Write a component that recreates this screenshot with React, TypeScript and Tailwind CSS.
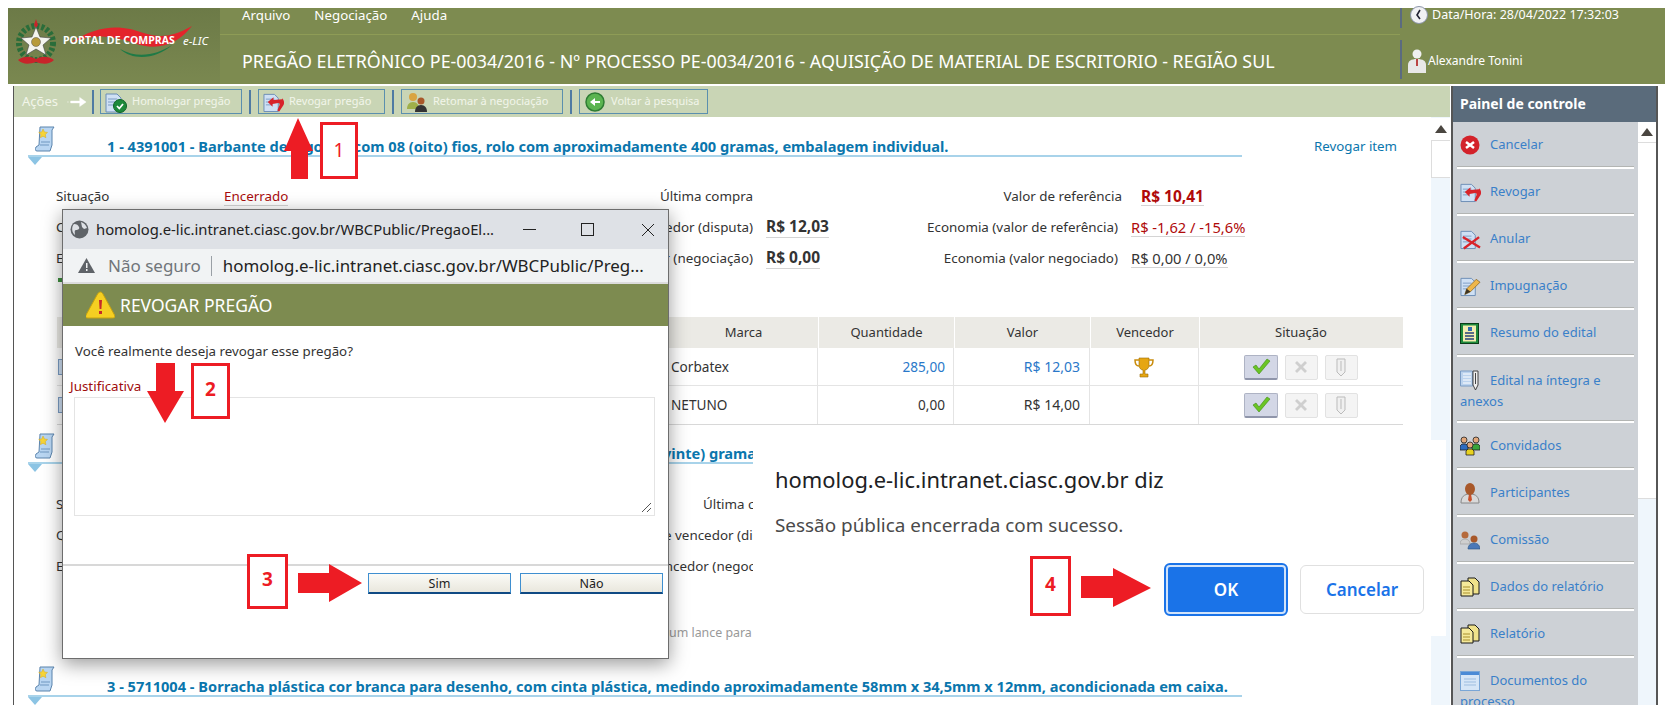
import type { ReactNode } from "react";

const BODY_FONT = "font-['Noto_Sans','Open_Sans',sans-serif]";

function ScrollIcon() {
  return (
    <svg width="20" height="26" viewBox="0 0 20 26" className="shrink-0">
      <path d="M5 1h14l-2 3v15l-2 6H2c-2 0-2-2-1-4l3-2z" fill="#b9d6f2" stroke="#5b84ad" />
      <path d="M6 16h9M5 19h9" stroke="#6e97c0" />
      <path d="M8 3l1.5 3 3 .4-2.2 2.1.6 3.2L8 10.200 5.300 11.700l.6-3.200L3.700 6.400l3-.4z" fill="#f6d437" stroke="#d6a91c" strokeWidth=".5" />
    </svg>
  );
}

function DocBase() {
  return (
    <>
      <path d="M1 3h11l4 4v14H1z" fill="#cfe0f4" stroke="#6b8db5" />
      <path d="M3 8h9M3 11h9M3 14h7" stroke="#7d9cc4" />
    </>
  );
}

function CheckDocIcon() {
  return (
    <svg width="22" height="22" viewBox="0 0 22 22" className="shrink-0">
      <DocBase />
      <circle cx="15" cy="15" r="6.500" fill="#1d8a3a" stroke="#0f6326" />
      <path d="M12 15l2.300 2.500L18 13" fill="none" stroke="#fff" strokeWidth="1.800" />
    </svg>
  );
}

function RevokeIcon() {
  return (
    <svg width="21" height="22" viewBox="0 0 22 22" className="shrink-0">
      <DocBase />
      <path d="M20 8l-9 1V6L5 11l5 5v-3l6-1c1 0 2 1 1 3l-2 5 2 1 4-6c2-3 1-6-1-8z" fill="#d8232a" />
    </svg>
  );
}

function AnnulIcon() {
  return (
    <svg width="21" height="22" viewBox="0 0 22 22" className="shrink-0">
      <DocBase />
      <path d="M3 9l18 11M20 9L4 21" stroke="#d8232a" strokeWidth="2.500" />
    </svg>
  );
}

function PencilIcon() {
  return (
    <svg width="21" height="22" viewBox="0 0 22 22" className="shrink-0">
      <DocBase />
      <path d="M5 20l2-6L17 4l4 3-10 10z" fill="#eeb64a" stroke="#7a5a20" strokeWidth=".7" />
      <path d="M5 20l2-6 4 3z" fill="#3d3322" />
    </svg>
  );
}

function SummaryIcon() {
  return (
    <svg width="20" height="21" viewBox="0 0 20 21" className="shrink-0">
      <rect x=".5" y=".5" width="18" height="20" fill="#1e8a3c" stroke="#0a3d18" />
      <rect x="3" y="2.500" width="13" height="16" fill="#f3eeb0" />
      <rect x="8" y="4" width="4" height="4" fill="#2f6bb0" />
      <path d="M5 10h9M5 13h9M5 16h9" stroke="#27407a" strokeWidth="1.300" />
    </svg>
  );
}

function ClipDocIcon() {
  return (
    <svg width="20" height="22" viewBox="0 0 20 22" className="shrink-0">
      <path d="M.5 2h12v15H.5z" fill="#bcd3ee" stroke="#7b9cc4" />
      <path d="M3 5h8M3 8h8M3 11h8M3 14h8" stroke="#fff" />
      <path d="M13 2h5v14l-2.500 5-2.500-5z" fill="#eee" stroke="#444" />
      <path d="M15.500 4v11" stroke="#444" />
    </svg>
  );
}

function PeopleIcon() {
  const head = (cx: number, cy: number, shirt: string) => (
    <>
      <circle cx={cx} cy={cy} r="3" fill="#e2a77a" stroke="#222" strokeWidth=".8" />
      <path d={`M${cx - 4} ${cy + 10}v-4l2-2h4l2 2v4z`} fill={shirt} stroke="#222" strokeWidth=".8" />
    </>
  );
  return (
    <svg width="20" height="20" viewBox="0 0 20 20" className="shrink-0">
      {head(4, 4, "#2e6cc0")}
      {head(16, 4, "#3aa53a")}
      {head(10, 9, "#e9d21f")}
    </svg>
  );
}

function PersonIcon() {
  return (
    <svg width="20" height="22" viewBox="0 0 20 22" className="shrink-0">
      <path d="M1 21c0-6 3-9 9-9s9 3 9 9z" fill="#d9d9d9" stroke="#888" />
      <path d="M9 12h2l1 6-2 2-2-2z" fill="#c9502b" />
      <ellipse cx="10" cy="7" rx="5" ry="6" fill="#a8582a" />
    </svg>
  );
}

function CommitteeIcon() {
  return (
    <svg width="20" height="19" viewBox="0 0 20 19" className="shrink-0">
      <circle cx="5" cy="4" r="3.500" fill="#b56a3c" />
      <path d="M0 13c0-3 2-5 5-5s5 2 5 5z" fill="#cfcfcf" stroke="#999" strokeWidth=".6" />
      <circle cx="14" cy="8" r="3.500" fill="#a8582a" />
      <path d="M8 18c0-3 2-6 6-6s6 3 6 6z" fill="#4a78b8" stroke="#27507f" strokeWidth=".6" />
    </svg>
  );
}

function ReportIcon() {
  return (
    <svg width="20" height="20" viewBox="0 0 20 20" className="shrink-0">
      <path d="M8 1h7l4 4v12H8z" fill="#f0e28a" stroke="#1a1a1a" />
      <path d="M1 4h8l4 4v11H1z" fill="#f5e99a" stroke="#1a1a1a" />
      <path d="M3 10h7M3 13h7M3 16h7" stroke="#a88f2c" />
    </svg>
  );
}

function WindowDocIcon() {
  return (
    <svg width="20" height="20" viewBox="0 0 20 20" className="shrink-0">
      <rect x=".5" y=".5" width="19" height="19" fill="#d6e6f7" stroke="#7aa6d6" />
      <rect x="1" y="1" width="18" height="3" fill="#4a8ad6" />
      <path d="M4 8h12M4 11h12M4 14h12" stroke="#9dbde0" />
    </svg>
  );
}

function UpTriangle() {
  return <div className="w-0 h-0 border-x-[6px] border-x-transparent border-b-[8px] border-b-[#4a4640]" />;
}

function ToolButton({ icon, label, width }: { icon: ReactNode; label: string; width: string }) {
  return (
    <div className={`flex items-center gap-[5px] h-[25px] pl-[4px] border border-[#5b8fae] ${width}`}>
      {icon}
      <span className="text-[11px] text-[#f2f5ea] whitespace-nowrap">{label}</span>
    </div>
  );
}

function Sep() {
  return <div className="w-[2px] h-[24px] bg-[#4f7ba3] shrink-0" />;
}

function Header() {
  return (
    <div className="flex h-[76px] w-[1657px] ml-[8px] bg-[#7d8b50] text-white">
      <div className="relative w-[212px] shrink-0 bg-gradient-to-b from-[#6c7a47] to-[#7a8850]">
        <svg width="200" height="50" viewBox="0 0 200 50" className="absolute left-[4px] top-[8px]">
          <path d="M58 27C80 12 100 9 118 13c20 5 32 14 62-3-14 18-34 26-58 17C100 19 80 18 58 27z" fill="#e3242b" />
          <path d="M108 33c18 10 36 6 52-4-14 13-38 17-52 4z" fill="#1f7a46" />
          <circle cx="24" cy="27" r="17" fill="none" stroke="#2a6d3a" strokeWidth="6" strokeDasharray="3 2" />
          <path d="M24 3l2 6-2 3-2-3z" fill="#c8242a" />
          <path d="M24 11l4 10 11 1-8 7 3 10-10-6-10 6 3-10-8-7 11-1z" fill="#f4f4ee" stroke="#444" strokeWidth=".6" />
          <circle cx="24" cy="26" r="4.500" fill="#b79a3a" stroke="#555" strokeWidth=".5" />
          <path d="M6 44c6-4 12-4 18-1 6-3 12-3 18 1-5 5-12 4-18 2-6 2-13 3-18-2z" fill="#c8242a" />
        </svg>
        <span className="absolute left-[55px] top-[25px] text-[10.500px] font-bold whitespace-nowrap font-['Open_Sans',sans-serif]">
          PORTAL DE COMPRAS
        </span>
        <span className="absolute left-[175px] top-[24px] text-[11.500px] italic whitespace-nowrap">e-LIC</span>
      </div>
      <div className="w-[1180px] shrink-0 pl-[22px] border-t-[26px] border-t-transparent">
        <div className="absolute top-[8px] flex gap-[24px] text-[13.300px] h-[16px] items-center">
          <span>Arquivo</span>
          <span>Negociação</span>
          <span>Ajuda</span>
        </div>
        <div className="border-t border-[#8e9c56] -ml-[22px] pl-[22px] pt-[14px] text-[17.870px] leading-[24px] whitespace-nowrap">
          PREGÃO ELETRÔNICO PE-0034/2016 - Nº PROCESSO PE-0034/2016 - AQUISIÇÃO DE MATERIAL DE ESCRITORIO - REGIÃO SUL
        </div>
      </div>
      <div className="flex flex-col text-[12.500px]">
        <div className="flex items-center h-[20px] border-l-2 border-[#5b6b80] pl-[7px] gap-[3px] pb-[5px]">
          <svg width="20" height="20" viewBox="0 0 20 20" className="shrink-0">
            <circle cx="10" cy="9" r="8.500" fill="#f1f1f4" stroke="#8a93a8" />
            <path d="M11 4l-3 5 3 4" fill="none" stroke="#223" strokeWidth="1.600" />
          </svg>
          <span className="whitespace-nowrap">Data/Hora: 28/04/2022 17:32:03</span>
        </div>
        <div className="flex items-center h-[39px] mt-[12px] border-l-2 border-[#5b6b80] pl-[6px] gap-[2px] pt-[3px] text-[12.100px]">
          <svg width="18" height="24" viewBox="0 0 18 24" className="shrink-0">
            <circle cx="9" cy="5" r="4.500" fill="#f0f0f0" />
            <path d="M0 24v-8c0-4 3-6 9-6s9 2 9 6v8z" fill="#e8e8e8" />
            <path d="M8 10h2v7H8z" fill="#b44" />
          </svg>
          <span className="whitespace-nowrap">Alexandre Tonini</span>
        </div>
      </div>
    </div>
  );
}

function Toolbar() {
  return (
    <div className="flex items-center h-[31px] bg-[#c9d5b5] pl-[8px]">
      <span className="text-[13px] text-[#f2f5ea] w-[45px]">Ações</span>
      <svg width="20" height="12" viewBox="0 0 22 12" className="shrink-0 mr-[5px]">
        <path d="M0 6h2M4 5h10V1l7 5-7 5V7H4z" fill="#fff" stroke="#fff" strokeWidth=".5" />
      </svg>
      <Sep />
      <div className="w-[6px]" />
      <ToolButton icon={<CheckDocIcon />} label="Homologar pregão" width="w-[142px]" />
      <div className="w-[7px]" />
      <Sep />
      <div className="w-[7px]" />
      <ToolButton icon={<RevokeIcon />} label="Revogar pregão" width="w-[127px]" />
      <div className="w-[7px]" />
      <Sep />
      <div className="w-[7px]" />
      <ToolButton
        icon={
          <svg width="22" height="20" viewBox="0 0 22 20" className="shrink-0">
            <circle cx="7" cy="5" r="4" fill="#d9a441" />
            <path d="M1 17c0-4 2-7 6-7s6 3 6 7z" fill="#9fb04a" />
            <circle cx="15" cy="9" r="3.500" fill="#a8582a" />
            <path d="M9 20c0-4 2-7 6-7s6 3 6 7z" fill="#333" />
          </svg>
        }
        label="Retomar à negociação"
        width="w-[162px]"
      />
      <div className="w-[7px]" />
      <Sep />
      <div className="w-[7px]" />
      <ToolButton
        icon={
          <svg width="22" height="22" viewBox="0 0 22 22" className="shrink-0">
            <circle cx="11" cy="11" r="9" fill="#5bb450" stroke="#2f7d33" strokeWidth="1.500" />
            <path d="M16 10H11V7l-5 4 5 4v-3h5z" fill="#fff" />
          </svg>
        }
        label="Voltar à pesquisa"
        width="w-[129px]"
      />
    </div>
  );
}

function SectionHead({ title, revoke, titleClass }: { title: string; revoke?: boolean; titleClass?: string }) {
  return (
    <div className="flex pl-[14px]">
      <div className="w-[1214px]">
        <div className="flex h-[40px] border-b-2 border-[#a8d3ea]">
          <div className="pl-[7px] pt-[9px] w-[79px] shrink-0">
            <ScrollIcon />
          </div>
          <div className={`pt-[20px] text-[14.600px] leading-[18px] font-bold text-[#0a76ad] whitespace-nowrap ${titleClass ?? ""}`}>
            {title}
          </div>
        </div>
        <div className="w-0 h-0 border-x-[7px] border-x-transparent border-t-[8px] border-t-[#8cc4e4]" />
      </div>
      {revoke && (
        <span className="ml-[72px] pt-[20px] h-fit text-[13.300px] leading-[18px] text-[#0a76ad] whitespace-nowrap">Revogar item</span>
      )}
    </div>
  );
}

function Underlined({ children, className }: { children: ReactNode; className?: string }) {
  return <span className={`border-b border-[#d4d4d4] leading-[17px] whitespace-nowrap ${className ?? ""}`}>{children}</span>;
}

function InfoRow(props: {
  a: string;
  b?: ReactNode;
  c: string;
  d?: ReactNode;
  e?: string;
  f?: ReactNode;
  lastGap?: string;
  cWidth?: string;
}) {
  return (
    <div className="flex items-center h-[31px] pl-[42px] text-[13.400px] text-[#333]">
      <span className="w-[168px] shrink-0 whitespace-nowrap">{props.a}</span>
      <span className="w-[150px] shrink-0">{props.b}</span>
      <span className={`shrink-0 text-right whitespace-nowrap ${props.cWidth ?? "w-[379px]"}`}>{props.c}</span>
      <span className="w-[150px] shrink-0 pl-[13px]">{props.d}</span>
      <span className={`shrink-0 text-right whitespace-nowrap ${props.lastGap ?? "w-[215px]"}`}>{props.e}</span>
      {props.f}
    </div>
  );
}

function ActionButtons() {
  return (
    <div className="flex justify-center gap-[7px]">
      <div className="flex items-center justify-center w-[34px] h-[25px] rounded-[2px] bg-[#d3d7e6] border border-[#aeb3c4] border-b-2 border-b-[#8f95aa]">
        <svg width="20" height="17" viewBox="0 0 20 17">
          <path d="M2 9l3-2 3 4 8-10 3 2L8 16z" fill="#6bc524" stroke="#3d8a12" strokeWidth=".6" />
        </svg>
      </div>
      <div className="flex items-center justify-center w-[33px] h-[25px] rounded-[2px] bg-[#f4f4f4] border border-[#e2e2e2]">
        <svg width="16" height="16" viewBox="0 0 16 16">
          <path d="M2 4l2-2 4 4 4-4 2 2-4 4 4 4-2 2-4-4-4 4-2-2 4-4z" fill="#cfcfcf" />
        </svg>
      </div>
      <div className="flex items-center justify-center w-[33px] h-[25px] rounded-[2px] bg-[#f4f4f4] border border-[#e2e2e2]">
        <svg width="10" height="20" viewBox="0 0 10 20">
          <path d="M1 2h8v13l-4 4-4-4z" fill="#f0f0f0" stroke="#bbb" />
          <path d="M5 4v10" stroke="#bbb" />
        </svg>
      </div>
    </div>
  );
}

function Table() {
  const cols = "grid grid-cols-[608px_153px_136px_136px_109px_203px]";
  const cell = "border-r border-[#e4e4e4] h-full leading-[38px]";
  return (
    <div className="ml-[43px] w-[1346px] text-[13px] text-[#333]">
      <div className={`${cols} h-[31px] items-center bg-[#ebeae5] text-center`}>
        <span />
        <span className="pl-[4px]">Marca</span>
        <span className="border-l border-white h-full leading-[31px]">Quantidade</span>
        <span className="border-l border-white h-full leading-[31px]">Valor</span>
        <span className="border-l border-white h-full leading-[31px]">Vencedor</span>
        <span className="border-l border-white h-full leading-[31px]">Situação</span>
      </div>
      <div className={`${cols} h-[38px] items-center border-b border-[#e4e4e4] text-[13.600px]`}>
        <span className="pl-[1px]"><div className="w-[10px] h-[16px] bg-[#cfe0f4] border border-[#7b9cc4]" /></span>
        <span className={`pl-[6px] ${cell}`}>Corbatex</span>
        <span className={`text-right pr-[8px] text-[#2a78c9] ${cell}`}>285,00</span>
        <span className={`text-right pr-[9px] text-[#2a78c9] text-[14px] ${cell}`}>R$ 12,03</span>
        <span className="flex items-center justify-center border-r border-[#e4e4e4] h-full">
          <svg width="20" height="21" viewBox="0 0 20 21">
            <path d="M5 1h10v7c0 3-2 5-4 5v4h3v3H6v-3h3v-4c-2 0-4-2-4-5z" fill="#e6a612" stroke="#9a6c06" strokeWidth=".6" />
            <path d="M5 3H1c0 4 2 6 4 6M15 3h4c0 4-2 6-4 6" fill="none" stroke="#c98c0c" strokeWidth="1.500" />
          </svg>
        </span>
        <ActionButtons />
      </div>
      <div className={`${cols} h-[39px] items-center border-b border-[#d8d8d8] text-[13.600px]`}>
        <span className="pl-[1px]"><div className="w-[10px] h-[16px] bg-[#cfe0f4] border border-[#7b9cc4]" /></span>
        <span className={`pl-[6px] ${cell}`}>NETUNO</span>
        <span className={`text-right pr-[8px] ${cell}`}>0,00</span>
        <span className={`text-right pr-[9px] text-[14px] ${cell}`}>R$ 14,00</span>
        <span className="border-r border-[#e4e4e4] h-full" />
        <ActionButtons />
      </div>
    </div>
  );
}

function MainContent() {
  return (
    <div className="w-[1417px] shrink-0 h-[588px] overflow-hidden">
      <div className="h-[307px]">
        <SectionHead
          revoke
          title="1 - 4391001 - Barbante de algodão com 08 (oito) fios, rolo com aproximadamente 400 gramas, embalagem individual."
        />
        <div className="pt-[16px]">
          <InfoRow
            a="Situação"
            b={<Underlined className="text-[#a80c0c]">Encerrado</Underlined>}
            c="Última compra"
            e="Valor de referência"
            lastGap="w-[219px]"
            f={<Underlined className="ml-[19px] text-[15.500px] font-bold text-[#b00a0a]">R$ 10,41</Underlined>}
          />
          <InfoRow
            a="C"
            c="Lance vencedor (disputa)"
            d={<Underlined className="text-[15.500px] font-bold">R$ 12,03</Underlined>}
            e="Economia (valor de referência)"
            f={<Underlined className="ml-[13px] text-[14.700px] text-[#b00a0a]">R$ -1,62 / -15,6%</Underlined>}
          />
          <InfoRow
            a="E"
            c="Lance vencedor (negociação)"
            d={<Underlined className="text-[15.500px] font-bold">R$ 0,00</Underlined>}
            e="Economia (valor negociado)"
            f={<Underlined className="ml-[13px] text-[14.700px]">R$ 0,00 / 0,0%</Underlined>}
          />
        </div>
        <div className="h-[43px] pl-[44px] pt-[4px]">
          <div className="w-[6px] h-[4px] bg-[#3f8f3f]" />
        </div>
        <Table />
      </div>
      <div className="h-[233px]">
        <SectionHead title="(vinte) gramas" titleClass="pl-[551px]" />
        <div className="pt-[17px]">
          <InfoRow a="Situação" c="Última compra" cWidth="w-[422px]" />
          <InfoRow a="Q" c="Lance vencedor (disputa)" cWidth="w-[418px]" />
          <InfoRow a="E" c="Lance vencedor (negociação)" cWidth="w-[418px]" />
        </div>
        <div className="pl-[655px] pt-[42px] text-[12.400px] text-[#999] whitespace-nowrap">um lance para</div>
      </div>
      <SectionHead title="3 - 5711004 - Borracha plástica cor branca para desenho, com cinta plástica, medindo aproximadamente 58mm x 34,5mm x 12mm, acondicionada em caixa." />
    </div>
  );
}

function MainScrollbar() {
  return (
    <div className="w-[19px] h-[588px] flex flex-col bg-[#eff6fc]">
      <div className="h-[23px] mt-[1px] bg-white border-b border-[#ddd] flex items-center justify-center">
        <UpTriangle />
      </div>
      <div className="h-[37px] bg-white border-b border-l border-[#ddd]" />
    </div>
  );
}

function PanelRow({ children, h = "h-[47px]", last }: { children: ReactNode; h?: string; last?: boolean }) {
  return (
    <div className={`mx-[4px] ${h} ${last ? "" : "border-b-2 border-b-white shadow-[inset_0_-1px_0_#b3b5b3]"}`}>
      {children}
    </div>
  );
}

function Line({ icon, text }: { icon: ReactNode; text: string }) {
  return (
    <div className="flex items-center h-[46px] pl-[3px] gap-[10px]">
      <span className="w-[20px] flex justify-center shrink-0">{icon}</span>
      <span>{text}</span>
    </div>
  );
}

function Wrapped({ icon, first, second }: { icon: ReactNode; first: string; second: string }) {
  return (
    <div className="pl-[3px] pt-[12px] leading-[21px]">
      <div className="flex items-center gap-[10px]">
        <span className="w-[20px] shrink-0">{icon}</span>
        <span>{first}</span>
      </div>
      <div>{second}</div>
    </div>
  );
}

function Panel() {
  const items: [ReactNode, string][] = [
    [
      <svg key="x" width="20" height="20" viewBox="0 0 20 20">
        <circle cx="10" cy="10" r="9.500" fill="#d3222a" />
        <path d="M6 7l8 6M14 7l-8 6" stroke="#fff" strokeWidth="2.500" />
      </svg>,
      "Cancelar",
    ],
    [<RevokeIcon key="r" />, "Revogar"],
    [<AnnulIcon key="a" />, "Anular"],
    [<PencilIcon key="p" />, "Impugnação"],
    [<SummaryIcon key="s" />, "Resumo do edital"],
  ];
  const lower: [ReactNode, string][] = [
    [<PeopleIcon key="c" />, "Convidados"],
    [<PersonIcon key="pa" />, "Participantes"],
    [<CommitteeIcon key="co" />, "Comissão"],
    [<ReportIcon key="d" />, "Dados do relatório"],
    [<ReportIcon key="re" />, "Relatório"],
  ];
  return (
    <div className="ml-[1px] w-[207px] h-[619px] border-x-2 border-[#565656] overflow-hidden shrink-0">
      <div className="h-[36px] bg-[#5a6b7b] pl-[7px] text-[14px] font-bold leading-[36px] text-white">Painel de controle</div>
      <div className="flex h-[583px]">
        <div className="w-[185px] bg-[#cdd1d6] text-[13px] text-[#3a80c9] overflow-hidden">
          {items.map(([icon, label]) => (
            <PanelRow key={label}><Line icon={icon} text={label} /></PanelRow>
          ))}
          <PanelRow h="h-[66px]">
            <Wrapped icon={<ClipDocIcon />} first="Edital na íntegra e" second="anexos" />
          </PanelRow>
          {lower.map(([icon, label]) => (
            <PanelRow key={label}><Line icon={icon} text={label} /></PanelRow>
          ))}
          <PanelRow last>
            <Wrapped icon={<WindowDocIcon />} first="Documentos do" second="processo" />
          </PanelRow>
        </div>
        <div className="flex-1 flex flex-col">
          <div className="h-[376px] bg-white">
            <div className="h-[21px] flex items-center justify-center border-b border-[#ddd]">
              <UpTriangle />
            </div>
          </div>
          <div className="flex-1 bg-[#eff6fc] border-t border-[#ddd]" />
        </div>
      </div>
    </div>
  );
}

function RevokeWindow() {
  return (
    <div className="absolute left-[62px] top-[209px] w-[607px] h-[450px] flex flex-col bg-white border border-[#6d6d6d] shadow-[0_5px_18px_rgba(0,0,0,0.4)]">
      <div className="flex items-center h-[39px] bg-[#dee1e6] pl-[7px] text-[14.800px] text-[#222]">
        <svg width="19" height="19" viewBox="0 0 19 19" className="shrink-0 mr-[7px]">
          <circle cx="9.500" cy="9.500" r="9" fill="#5f6368" />
          <path d="M4 4c3 0 4 1 5 3s-1 3-3 3-1 3-1 5C2 13 1 7 4 4zM11 2c3 1 5 3 6 6l-3 1-2-2z" fill="#dee1e6" />
        </svg>
        <span className="w-[418px] whitespace-nowrap">homolog.e-lic.intranet.ciasc.gov.br/WBCPublic/PregaoEl...</span>
        <span className="w-[13px] h-px bg-[#222] ml-[9px]" />
        <span className="w-[13px] h-[13px] border border-[#222] ml-[45px]" />
        <svg width="14" height="14" viewBox="0 0 14 14" className="ml-[47px]">
          <path d="M1 1l12 12M13 1L1 13" stroke="#222" />
        </svg>
      </div>
      <div className="flex items-center h-[35px] bg-[#f1f3f4] border-b-2 border-[#dcdcdc] pl-[15px] text-[17px]">
        <svg width="17" height="15" viewBox="0 0 17 15" className="shrink-0">
          <path d="M8.500 0L17 15H0z" fill="#5f6368" />
          <path d="M8 5h1.500v5H8zM8 11h1.500v2H8z" fill="#f1f3f4" />
        </svg>
        <span className="ml-[13px] text-[#70757a] whitespace-nowrap">Não seguro</span>
        <span className="w-px h-[20px] bg-[#9aa0a6] ml-[10px]" />
        <span className="ml-[11px] text-[#222] text-[16.900px] whitespace-nowrap">homolog.e-lic.intranet.ciasc.gov.br/WBCPublic/Preg...</span>
      </div>
      <div className="flex items-center h-[42px] bg-[#7d8b50] pl-[23px] text-[17.500px] text-white">
        <svg width="29" height="28" viewBox="0 0 29 28" className="shrink-0 mr-[5px]">
          <path d="M14.500 1c1 0 2 1 3 3l11 20c1 2 0 3-2 3H2c-2 0-3-1-2-3L11 4c1-2 2-3 3.500-3z" fill="#f5cf22" stroke="#c7a30e" />
          <path d="M13 9h3l-.6 9h-1.800zM13 20h3v3h-3z" fill="#c62a2a" />
        </svg>
        <span>REVOGAR PREGÃO</span>
      </div>
      <div className="pl-[12px] pt-[16px] text-[13.300px] leading-[18px] text-[#333]">Você realmente deseja revogar esse pregão?</div>
      <div className="pl-[7px] pt-[18px] text-[13.400px] leading-[16px] text-[#a00c0c]">Justificativa</div>
      <div className="relative ml-[11px] mt-[3px] w-[581px] h-[119px] border border-[#e4e4e4]">
        <svg width="11" height="11" viewBox="0 0 11 11" className="absolute right-[2px] bottom-[2px]">
          <path d="M1 10L10 1M6 10l4-4" stroke="#555" />
        </svg>
      </div>
      <div className="mt-[48px] border-t-2 border-[#d8d8d8]" />
      <div className="flex justify-end gap-[9px] pt-[7px] pr-[5px]">
        <DialogButton label="Sim" />
        <DialogButton label="Não" />
      </div>
    </div>
  );
}

function DialogButton({ label }: { label: string }) {
  return (
    <div className="w-[143px] h-[21px] text-center text-[12.500px] leading-[20px] text-[#222] bg-gradient-to-b from-[#fbfbf7] to-[#e9e7dd] border border-[#3f8fd0] border-b-2 border-b-[#0f4a83]">
      {label}
    </div>
  );
}

function AlertBox() {
  return (
    <div className="absolute left-[753px] top-[440px] w-[693px] h-[196px] bg-white">
      <div className="pl-[22px] pt-[26px] text-[21.900px] leading-[28px] text-[#202124] whitespace-nowrap">
        homolog.e-lic.intranet.ciasc.gov.br diz
      </div>
      <div className="pl-[22px] pt-[19px] text-[18.900px] leading-[24px] text-[#4a4a4a] whitespace-nowrap">
        Sessão pública encerrada com sucesso.
      </div>
      <div className="flex justify-end items-center gap-[12px] pr-[22px] pt-[26px] text-[17px] font-semibold">
        <div className="w-[124px] h-[53px] rounded-[6px] bg-[#1a73e8] border-2 border-[#1a73e8] outline outline-2 -outline-offset-4 outline-white/80 flex items-center justify-center text-white">OK</div>
        <div className="w-[124px] h-[49px] rounded-[6px] border border-[#e0e0e0] flex items-center justify-center text-[#1a73e8]">Cancelar</div>
      </div>
    </div>
  );
}

function StepBox({ n, className, bold = true }: { n: number; className: string; bold?: boolean }) {
  return (
    <div
      className={`absolute flex items-center justify-center bg-white border-[3px] border-[#ed1c24] text-[#ed1c24] text-[19px] ${bold ? "font-bold pb-[4px]" : ""} ${className}`}
    >
      {n}
    </div>
  );
}

function Annotations() {
  return (
    <>
      <svg width="30" height="62" viewBox="0 0 30 62" className="absolute left-[284px] top-[118px]">
        <polygon points="14,0 29,33 24,33 24,61 7,61 7,33 0,33" fill="#ed1c24" />
      </svg>
      <StepBox n={1} bold={false} className="left-[320px] top-[122px] w-[38px] h-[57px]" />
      <svg width="38" height="61" viewBox="0 0 38 61" className="absolute left-[147px] top-[363px]">
        <polygon points="9,0 28,0 28,28 37,28 18,60 0,28 9,28" fill="#ed1c24" />
      </svg>
      <StepBox n={2} className="left-[191px] top-[363px] w-[39px] h-[56px]" />
      <StepBox n={3} className="left-[247px] top-[554px] w-[41px] h-[55px]" />
      <svg width="64" height="38" viewBox="0 0 64 38" className="absolute left-[298px] top-[564px]">
        <polygon points="0,9 31,9 31,0 64,19 31,38 31,29 0,29" fill="#ed1c24" />
      </svg>
      <StepBox n={4} className="left-[1030px] top-[556px] w-[41px] h-[60px]" />
      <svg width="70" height="39" viewBox="0 0 70 39" className="absolute left-[1081px] top-[568px]">
        <polygon points="0,8 32,8 32,0 70,20 32,39 32,30 0,30" fill="#ed1c24" />
      </svg>
    </>
  );
}

export default function App() {
  return (
    <div className={`relative w-[1679px] h-[710px] overflow-hidden bg-white pt-[8px] ${BODY_FONT}`}>
      <Header />
      <div className="flex mt-[2px] ml-[13px] h-[619px]">
        <div className="w-[1437px] shrink-0 border-l border-[#555]">
          <Toolbar />
          <div className="flex">
            <MainContent />
            <MainScrollbar />
          </div>
        </div>
        <Panel />
      </div>
      <RevokeWindow />
      <AlertBox />
      <Annotations />
    </div>
  );
}
